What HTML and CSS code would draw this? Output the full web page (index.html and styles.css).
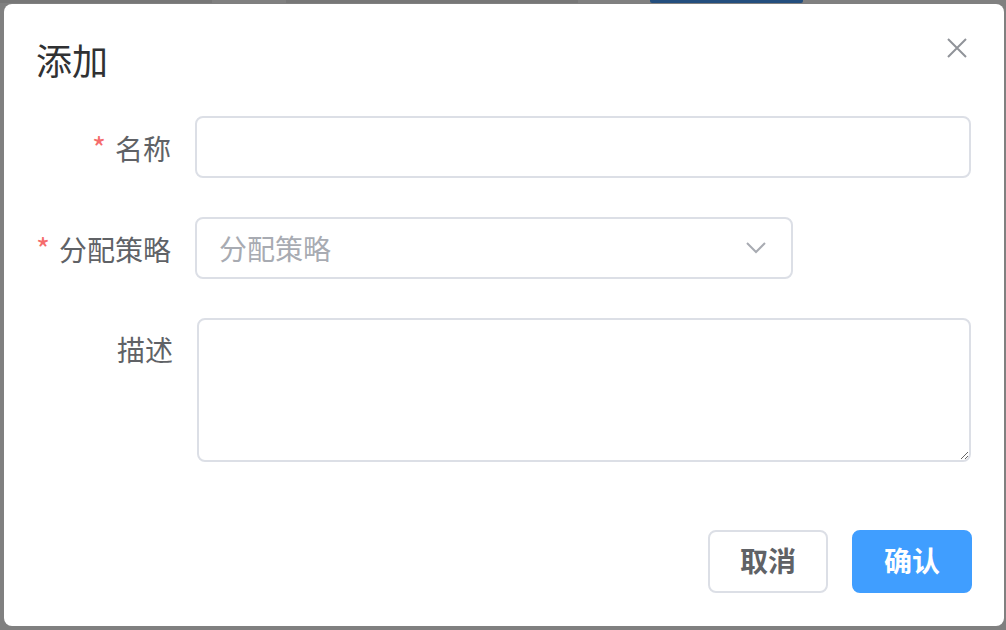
FILE: index.html
```html
<!DOCTYPE html>
<html lang="zh-CN">
<head>
<meta charset="utf-8">
<title>添加</title>
<link rel="stylesheet" href="styles.css">
</head>
<body>
<div class="backdrop-top">
  <span class="strip strip-a"></span>
  <span class="strip strip-b"></span>
  <span class="strip strip-c"></span>
</div>
<div class="dialog">
  <div class="dialog-header">
    <span class="dialog-title">添加</span>
    <button class="close-btn" type="button" aria-label="关闭">
      <svg width="20" height="20" viewBox="0 0 20 20"><path d="M1 1 L19 19 M19 1 L1 19" stroke="#909399" stroke-width="2" fill="none"/></svg>
    </button>
  </div>
  <form class="dialog-body">
    <div class="form-item">
      <label class="form-label required">名称</label>
      <div class="form-control"><input class="text-input" type="text"></div>
    </div>
    <div class="form-item">
      <label class="form-label required">分配策略</label>
      <div class="form-control">
        <div class="select">
          <span class="placeholder">分配策略</span>
          <svg class="chevron" width="20" height="12" viewBox="0 0 20 12"><path d="M1 1 L10 10 L19 1" stroke="#a8abb2" stroke-width="2" fill="none"/></svg>
        </div>
      </div>
    </div>
    <div class="form-item item-desc">
      <label class="form-label">描述</label>
      <div class="form-control"><textarea class="textarea"></textarea></div>
    </div>
  </form>
  <div class="dialog-footer">
    <button class="btn btn-default" type="button">取消</button>
    <button class="btn btn-primary" type="button">确认</button>
  </div>
</div>
</body>
</html>
```
FILE: styles.css
```css
html, body {
  margin: 0;
  padding: 0;
}
body {
  width: 1006px;
  height: 630px;
  overflow: hidden;
  background: #808080;
  font-family: "Noto Sans CJK SC", "Noto Sans", sans-serif;
}
.backdrop-top {
  height: 4px;
  display: flex;
}
.strip {
  height: 3px;
  display: block;
}
.strip-a { width: 212px; background: #777777; }
.strip-b { width: 292px; margin-left: 74px; background: #777777; }
.strip-c { width: 153px; margin-left: 72px; background: #234e7e; border-radius: 0 0 2px 2px; }

.dialog {
  margin-left: 4px;
  width: 1000px;
  height: 622px;
  background: #ffffff;
  border-radius: 8px;
  box-sizing: border-box;
  display: flex;
  flex-direction: column;
}
.dialog-header {
  display: flex;
  justify-content: space-between;
  align-items: flex-start;
  padding: 34px 37px 0 32px;
}
.dialog-title {
  margin-top: 3px;
  font-size: 36px;
  line-height: 36px;
  color: #303133;
}
.close-btn {
  width: 20px;
  height: 20px;
  padding: 0;
  border: 0;
  background: none;
  display: block;
}
.close-btn svg { display: block; }

.dialog-body {
  margin: 0;
  padding: 39px 33px 0 0;
  display: flex;
  flex-direction: column;
  gap: 38px;
}
.form-item {
  display: flex;
  align-items: flex-start;
}
.form-label {
  width: 191px;
  flex: none;
  box-sizing: border-box;
  padding-right: 24px;
  text-align: right;
  font-size: 28px;
  line-height: 62px;
  color: #606266;
}
.item-desc .form-label { width: 193px; }
.form-label.required::before {
  content: "*";
  color: #f56c6c;
  margin-right: 9px;
  font-size: 30px;
}
.form-control {
  flex: 1;
  display: flex;
}
.text-input {
  flex: 1;
  height: 62px;
  box-sizing: border-box;
  border: 2px solid #dcdfe6;
  border-radius: 8px;
  padding: 0 22px;
  font-size: 28px;
  font-family: inherit;
  outline: none;
  background: #fff;
}
.select {
  width: 598px;
  height: 62px;
  box-sizing: border-box;
  border: 2px solid #dcdfe6;
  border-radius: 8px;
  padding: 0 25px 0 22px;
  display: flex;
  align-items: center;
  justify-content: space-between;
}
.placeholder {
  font-size: 28px;
  color: #a8abb2;
}
.chevron { display: block; }
.textarea {
  flex: 1;
  height: 144px;
  box-sizing: border-box;
  border: 2px solid #dcdfe6;
  border-radius: 8px;
  padding: 10px 22px;
  font-size: 28px;
  font-family: inherit;
  resize: vertical;
  outline: none;
  display: block;
}

.dialog-footer {
  margin-top: auto;
  display: flex;
  justify-content: flex-end;
  gap: 24px;
  padding: 0 32px 33px 0;
}
.btn {
  width: 120px;
  height: 63px;
  box-sizing: border-box;
  border-radius: 8px;
  font-family: inherit;
  font-size: 28px;
  font-weight: 700;
  padding: 0 0 3px;
  cursor: pointer;
}
.btn-default {
  background: #fff;
  border: 2px solid #dcdfe6;
  color: #606266;
}
.btn-primary {
  background: #409eff;
  border: 2px solid #409eff;
  color: #fff;
}
```
